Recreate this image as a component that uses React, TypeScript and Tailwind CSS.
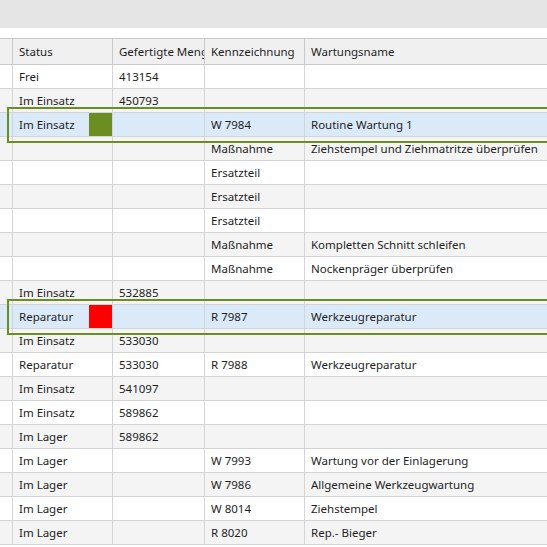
import React from 'react';

type Row = {
  status?: string;
  menge?: string;
  kenn?: string;
  name?: string;
  mark?: 'green' | 'red';
};

const rows: Row[] = [
  { status: 'Frei', menge: '413154' },
  { status: 'Im Einsatz', menge: '450793' },
  { status: 'Im Einsatz', kenn: 'W 7984', name: 'Routine Wartung 1', mark: 'green' },
  { kenn: 'Maßnahme', name: 'Ziehstempel und Ziehmatritze überprüfen' },
  { kenn: 'Ersatzteil' },
  { kenn: 'Ersatzteil' },
  { kenn: 'Ersatzteil' },
  { kenn: 'Maßnahme', name: 'Kompletten Schnitt schleifen' },
  { kenn: 'Maßnahme', name: 'Nockenpräger überprüfen' },
  { status: 'Im Einsatz', menge: '532885' },
  { status: 'Reparatur', kenn: 'R 7987', name: 'Werkzeugreparatur', mark: 'red' },
  { status: 'Im Einsatz', menge: '533030' },
  { status: 'Reparatur', menge: '533030', kenn: 'R 7988', name: 'Werkzeugreparatur' },
  { status: 'Im Einsatz', menge: '541097' },
  { status: 'Im Einsatz', menge: '589862' },
  { status: 'Im Lager', menge: '589862' },
  { status: 'Im Lager', kenn: 'W 7993', name: 'Wartung vor der Einlagerung' },
  { status: 'Im Lager', kenn: 'W 7986', name: 'Allgemeine Werkzeugwartung' },
  { status: 'Im Lager', kenn: 'W 8014', name: 'Ziehstempel' },
  { status: 'Im Lager', kenn: 'R 8020', name: 'Rep.- Bieger' },
];

function GridRow({ row, index }: { row: Row; index: number }) {
  const bg = row.mark ? 'bg-[#dbeaf8]' : index % 2 === 1 ? 'bg-[#f4f4f4]' : 'bg-white';
  return (
    <div className={`relative flex h-[24px] border-b border-[#d4d4d4] ${bg}`}>
      <div className="w-[12px] shrink-0" />
      <div className="relative flex w-[100px] shrink-0 items-center border-l border-[#d4d4d4] pl-[6px]">
        {row.status}
        {row.mark && (
          <div
            className={`absolute right-0 top-0 h-[23px] w-[23px] ${
              row.mark === 'green' ? 'bg-[#6b8e23]' : 'bg-[#ff0000]'
            }`}
          />
        )}
      </div>
      <div className="flex w-[92px] shrink-0 items-center border-l border-[#d4d4d4] pl-[6px]">{row.menge}</div>
      <div className="flex w-[100px] shrink-0 items-center border-l border-[#d4d4d4] pl-[6px]">{row.kenn}</div>
      <div className="flex flex-1 items-center whitespace-nowrap border-l border-[#d4d4d4] pl-[6px]">{row.name}</div>
      {row.mark && (
        <div className="pointer-events-none absolute left-[7px] right-[-20px] top-[-6px] z-10 h-[36px] border-2 border-[#6b8e23]" />
      )}
    </div>
  );
}

export default function App() {
  return (
    <div
      className="h-[547px] w-[547px] overflow-hidden bg-white text-[11.5px] text-[#1e1e1e]"
      style={{ fontFamily: '"Noto Sans", "Open Sans", sans-serif' }}
    >
      <div className="h-[28px] bg-[#e5e5e5]" />
      <div className="h-[10px]" />
      <div className="flex h-[27px] border-y border-[#c9c9c9] bg-[#f0f0f0]">
        <div className="w-[12px] shrink-0" />
        <div className="flex w-[100px] shrink-0 items-center border-l border-[#c9c9c9] pl-[6px]">Status</div>
        <div className="flex w-[92px] shrink-0 items-center overflow-hidden whitespace-nowrap border-l border-[#c9c9c9] pl-[6px]">
          Gefertigte Menge
        </div>
        <div className="flex w-[100px] shrink-0 items-center overflow-hidden whitespace-nowrap border-l border-[#c9c9c9] pl-[6px]">
          Kennzeichnung
        </div>
        <div className="flex flex-1 items-center border-l border-[#c9c9c9] pl-[6px]">Wartungsname</div>
      </div>
      <div>
        {rows.map((row, i) => (
          <GridRow key={i} row={row} index={i} />
        ))}
      </div>
    </div>
  );
}
